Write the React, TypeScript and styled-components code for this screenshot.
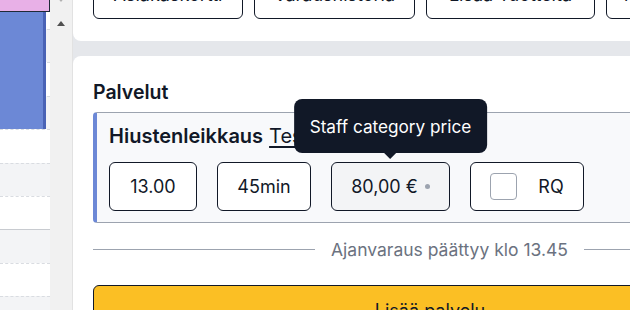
import React from "react";
import styled, { createGlobalStyle } from "styled-components";

const Global = createGlobalStyle`
  html, body { margin: 0; padding: 0; overflow: hidden; background: #fff; }
  body { font-family: Inter, "Noto Sans", sans-serif; color: #111827; }
  * { box-sizing: border-box; }
`;

const Page = styled.div`
  display: flex;
  width: 900px;
  height: 310px;
`;

const Calendar = styled.div`
  position: relative;
  width: 50px;
  flex: 0 0 50px;
  display: flex;
  flex-direction: column;
  margin-top: -4.4px;
`;

const Slot = styled.div<{ $gray: boolean; $solid: boolean }>`
  height: 33.4px;
  flex: 0 0 33.4px;
  background: ${(p) => (p.$gray ? "#f3f4f6" : "#ffffff")};
  border-top: 1px ${(p) => (p.$solid ? "solid #c8cbd0" : "dashed #d9dce1")};
`;

const PinkEvent = styled.div`
  position: absolute;
  left: 0;
  top: 0;
  width: 50px;
  height: 16px;
  background: #e8b0e7;
  border-right: 1px solid #1f2937;
  border-bottom: 1px solid #1f2937;
`;

const BlueEvent = styled.div`
  position: absolute;
  left: 0;
  top: 16.6px;
  width: 46px;
  height: 116.5px;
  background: #6c88d6;
  border-right: 3px solid #4a63b6;
`;

const Scrollbar = styled.div`
  width: 23px;
  flex: 0 0 23px;
  background: #f1f1f1;
  border-right: 1px solid #e2e2e2;
  display: flex;
  flex-direction: column;
  align-items: center;
  margin-top: -3px;
`;

const Arrow = styled.div<{ $up: boolean; $color: string }>`
  width: 0;
  height: 0;
  border-left: 4.5px solid transparent;
  border-right: 4.5px solid transparent;
  ${(p) =>
    p.$up
      ? `border-bottom: 5px solid ${p.$color};`
      : `border-top: 5px solid ${p.$color};`}
`;

const ArrowGap = styled.div`
  height: 18.5px;
`;

const Main = styled.div`
  background: #e5e7eb;
  display: flex;
  flex-direction: column;
  gap: 15px;
  width: 714px;
  flex: 0 0 714px;
`;

const TopCard = styled.div`
  background: #fff;
  border-radius: 0 0 8px 8px;
  padding: 0 20px 22px;
  margin-top: -30px;
  display: flex;
  gap: 11px;
`;

const OutlineButton = styled.button<{ $w: number }>`
  width: ${(p) => p.$w}px;
  flex: 0 0 auto;
  height: 49px;
  background: #fff;
  border: 1.5px solid #111827;
  border-radius: 6px;
  font-family: Inter, sans-serif;
  font-size: 18px;
  color: #111827;
`;

const ServiceCard = styled.div`
  background: #fff;
  border-radius: 8px 8px 0 0;
  padding: 22px 20px 0;
  flex: 1;
`;

const Heading = styled.h2`
  margin: 0 0 6px;
  font-size: 19.5px;
  line-height: 28px;
  font-weight: 600;
`;

const ServiceBox = styled.div`
  background: #f8f9fb;
  border-top: 1px solid #9ca3af;
  border-bottom: 1px solid #9ca3af;
  border-left: 4px solid #6c88d6;
  border-radius: 4px 0 0 4px;
  padding: 9px 12px 11px;
`;

const TitleRow = styled.div`
  display: flex;
  align-items: baseline;
  gap: 6px;
  font-size: 20px;
  line-height: 28px;
  margin-bottom: 12px;
`;

const ServiceName = styled.span`
  font-weight: 600;
`;

const StaffLink = styled.span`
  text-decoration: underline;
  text-underline-offset: 3px;
`;

const FieldRow = styled.div`
  display: flex;
  gap: 20px;
`;

const Field = styled.div<{ $w: number; $muted?: boolean }>`
  position: relative;
  width: ${(p) => p.$w}px;
  height: 49px;
  display: flex;
  align-items: center;
  justify-content: center;
  background: ${(p) => (p.$muted ? "#f3f4f6" : "#fff")};
  border: 1.5px solid #111827;
  border-radius: 6px;
  font-size: 18px;
`;

const Dot = styled.span`
  width: 5px;
  height: 5px;
  border-radius: 50%;
  background: #9ca3af;
  margin-left: 7px;
`;

const Checkbox = styled.span`
  width: 27px;
  height: 27px;
  border: 1px solid #9ca3af;
  border-radius: 4px;
  background: #fff;
  margin-right: 21px;
`;

const Tooltip = styled.div`
  position: absolute;
  left: 50%;
  bottom: calc(100% + 10px);
  transform: translateX(-50%);
  background: #111827;
  color: #fff;
  border-radius: 8px;
  height: 54px;
  padding: 0 16px;
  display: flex;
  align-items: center;
  white-space: nowrap;
  font-size: 17.2px;
  &::after {
    content: "";
    position: absolute;
    left: 50%;
    top: 100%;
    margin-left: -6px;
    border-left: 6px solid transparent;
    border-right: 6px solid transparent;
    border-top: 6px solid #111827;
  }
`;

const Divider = styled.div`
  display: flex;
  align-items: center;
  gap: 16px;
  height: 52px;
  font-size: 17.5px;
  color: #6b7280;
  width: 712px;
`;

const Rule = styled.span<{ $fixed?: number }>`
  height: 1px;
  background: #9ca3af;
  flex: ${(p) => (p.$fixed ? `0 0 ${p.$fixed}px` : "1")};
`;

const AddButton = styled.button`
  margin-top: 10px;
  width: 100%;
  height: 50px;
  background: #fbbf24;
  border: 1px solid #111827;
  border-radius: 6px;
  font-family: Inter, sans-serif;
  font-size: 18px;
  color: #111827;
`;

const slots = Array.from({ length: 10 }, (_, i) => i);

export default function App() {
  return (
    <>
      <Global />
      <Page>
        <Calendar>
          {slots.map((i) => (
            <Slot key={i} $gray={i % 2 === 1} $solid={i === 7} />
          ))}
          <PinkEvent />
          <BlueEvent />
        </Calendar>
        <Scrollbar>
          <Arrow $up={false} $color="#b0b0b0" />
          <ArrowGap />
          <Arrow $up={true} $color="#505050" />
        </Scrollbar>
        <Main>
          <TopCard>
            <OutlineButton $w={150}>Asiakaskortti</OutlineButton>
            <OutlineButton $w={161}>Varaushistoria</OutlineButton>
            <OutlineButton $w={169}>Lisää Tuotteita</OutlineButton>
            <OutlineButton $w={150}>Muistiinpanot</OutlineButton>
          </TopCard>
          <ServiceCard>
            <Heading>Palvelut</Heading>
            <ServiceBox>
              <TitleRow>
                <ServiceName>Hiustenleikkaus</ServiceName>
                <StaffLink>Testi Työntekijä</StaffLink>
              </TitleRow>
              <FieldRow>
                <Field $w={88}>13.00</Field>
                <Field $w={94}>45min</Field>
                <Field $w={119} $muted>
                  80,00 €<Dot />
                  <Tooltip>Staff category price</Tooltip>
                </Field>
                <Field $w={114}>
                  <Checkbox />
                  RQ
                </Field>
              </FieldRow>
            </ServiceBox>
            <Divider>
              <Rule $fixed={222} />
              <span>Ajanvaraus päättyy klo 13.45</span>
              <Rule />
            </Divider>
            <AddButton>Lisää palvelu</AddButton>
          </ServiceCard>
        </Main>
      </Page>
    </>
  );
}
